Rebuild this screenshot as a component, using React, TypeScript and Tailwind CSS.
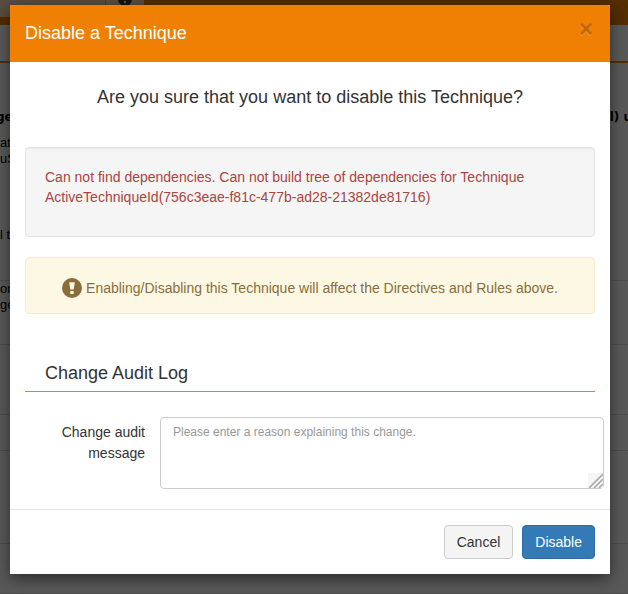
import { useState } from 'react'

function ExclamationSign({ className }: { className?: string }) {
  return (
    <svg viewBox="0 0 20 20" className={className} fill="currentColor" aria-hidden>
      <path
        fillRule="evenodd"
        d="M10 0a10 10 0 1 1 0 20a10 10 0 1 1 0-20zM7.6 4.2h4.8a.4.4 0 0 1 .4.5l-1.1 6.4a.6.6 0 0 1-.6.5H8.900a.6.6 0 0 1-.6-.5L7.200 4.700a.4.4 0 0 1 .4-.5zM8.600 13h2.800a.3.3 0 0 1 .3.3v2.400a.3.3 0 0 1-.3.3H8.600a.3.3 0 0 1-.3-.3v-2.400a.3.3 0 0 1 .3-.3z"
      />
    </svg>
  )
}

function PageBehind() {
  return (
    <div className="h-full overflow-hidden bg-white text-[13px] text-black" aria-hidden>
      <header className="flex h-[25px] bg-[#f08004]">
        <div className="flex h-[17px] w-36 bg-[#ffdab8]">
          <div className="w-[106px] border-r border-[#c8a888]" />
          <div className="flex flex-1 items-start justify-center">
            <ExclamationSign className="-mt-2 size-3.5 text-[#333333]" />
          </div>
        </div>
      </header>
      <div className="h-[38px] border-b-2 border-[#f08004]" />
      <div className="-mx-1 mt-11 flex justify-between font-['DejaVu_Sans'] text-xs leading-5 font-bold">
        <span>ge</span>
        <span>l) u</span>
      </div>
      <div className="mt-2 leading-4">
        at
        <br />
        uS
      </div>
      <div className="mt-[58px] h-14 border-b border-[#dddddd] leading-5">l t</div>
      <div className="h-16 border-b border-[#dddddd] leading-4">
        on
        <br />
        ge
      </div>
      <div className="h-[70px] border-b border-[#dddddd]" />
      <div className="h-9 border-b border-[#dddddd]" />
      <div className="h-[93px] border-b border-[#dddddd]" />
      <div className="h-[50px] border-b border-[#dddddd]" />
    </div>
  )
}

export default function App() {
  const [message, setMessage] = useState('')

  return (
    <div className="relative h-screen overflow-hidden font-['Liberation_Sans',Arial,sans-serif]">
      <PageBehind />

      <div className="absolute inset-0 flex items-start justify-center bg-black/65 pt-[5px] pr-[18px] pl-[10px]">
        <div
          role="dialog"
          aria-modal="true"
          aria-labelledby="dialog-title"
          className="w-full max-w-[600px] bg-white text-sm text-[#333333] shadow-[0_5px_15px_rgba(0,0,0,0.5)]"
        >
          <div className="flex items-start justify-between bg-[#f08004] px-[15px] py-4">
            <h4 id="dialog-title" className="text-lg leading-[25px] text-white">
              Disable a Technique
            </h4>
            <button
              type="button"
              aria-label="Close"
              className="px-0.5 text-2xl leading-4 font-bold text-black opacity-20 [text-shadow:0_1px_0_#fff]"
            >
              ×
            </button>
          </div>

          <div className="px-[15px] pt-[25px] pb-5">
            <h4 className="text-center text-lg leading-5">
              Are you sure that you want to disable this Technique?
            </h4>

            <div className="mt-10 rounded-sm border border-[#e3e3e3] bg-[#f5f5f5] px-[19px] pt-[19px] pb-[29px] leading-5 text-[#a94442] shadow-[inset_0_1px_1px_rgba(0,0,0,0.05)]">
              Can not find dependencies. Can not build tree of dependencies for Technique
              ActiveTechniqueId(756c3eae-f81c-477b-ad28-21382de81716)
            </div>

            <div className="mt-5 flex items-center justify-center gap-1 rounded-sm border border-[#faebcc] bg-[#fcf8e3] px-4 pt-5 pb-[15px] leading-5 text-[#8a6d3b]">
              <ExclamationSign className="size-5 shrink-0" />
              <span>Enabling/Disabling this Technique will affect the Directives and Rules above.</span>
            </div>

            <h4 className="mt-[49px] border-b border-[#f08004] px-5 pb-2 text-lg leading-5">
              Change Audit Log
            </h4>

            <div className="mt-[25px] -mr-[9px] flex gap-[15px]">
              <label htmlFor="reason" className="w-[120px] shrink-0 pt-[5px] text-right leading-[21px]">
                Change audit message
              </label>
              <div className="relative flex-1">
                <textarea
                  id="reason"
                  value={message}
                  onChange={(e) => setMessage(e.target.value)}
                  placeholder="Please enter a reason explaining this change."
                  className="block h-[72px] w-full resize-none rounded-sm border border-[#cccccc] bg-white px-3 py-1.5 text-xs leading-4 placeholder:text-[#999999]"
                />
                <svg
                  viewBox="0 0 15 15"
                  className="pointer-events-none absolute right-px bottom-px size-[15px]"
                  aria-hidden
                >
                  <path d="M0 0h15v15H0z" fill="#f5f5f5" />
                  <path d="M1 15L15 1M6 15l9-9M11 15l4-4" stroke="#aaaaaa" strokeWidth="1.6" />
                </svg>
              </div>
            </div>
          </div>

          <div className="flex justify-end gap-[9px] border-t border-[#e5e5e5] p-[15px]">
            <button
              type="button"
              className="rounded-sm border border-[#cccccc] bg-[#f4f4f4] px-3 py-1.5 leading-5"
            >
              Cancel
            </button>
            <button
              type="button"
              className="rounded-sm border border-[#2e6da4] bg-[#337ab7] px-3 py-1.5 leading-5 text-white"
            >
              Disable
            </button>
          </div>
        </div>
      </div>
    </div>
  )
}
